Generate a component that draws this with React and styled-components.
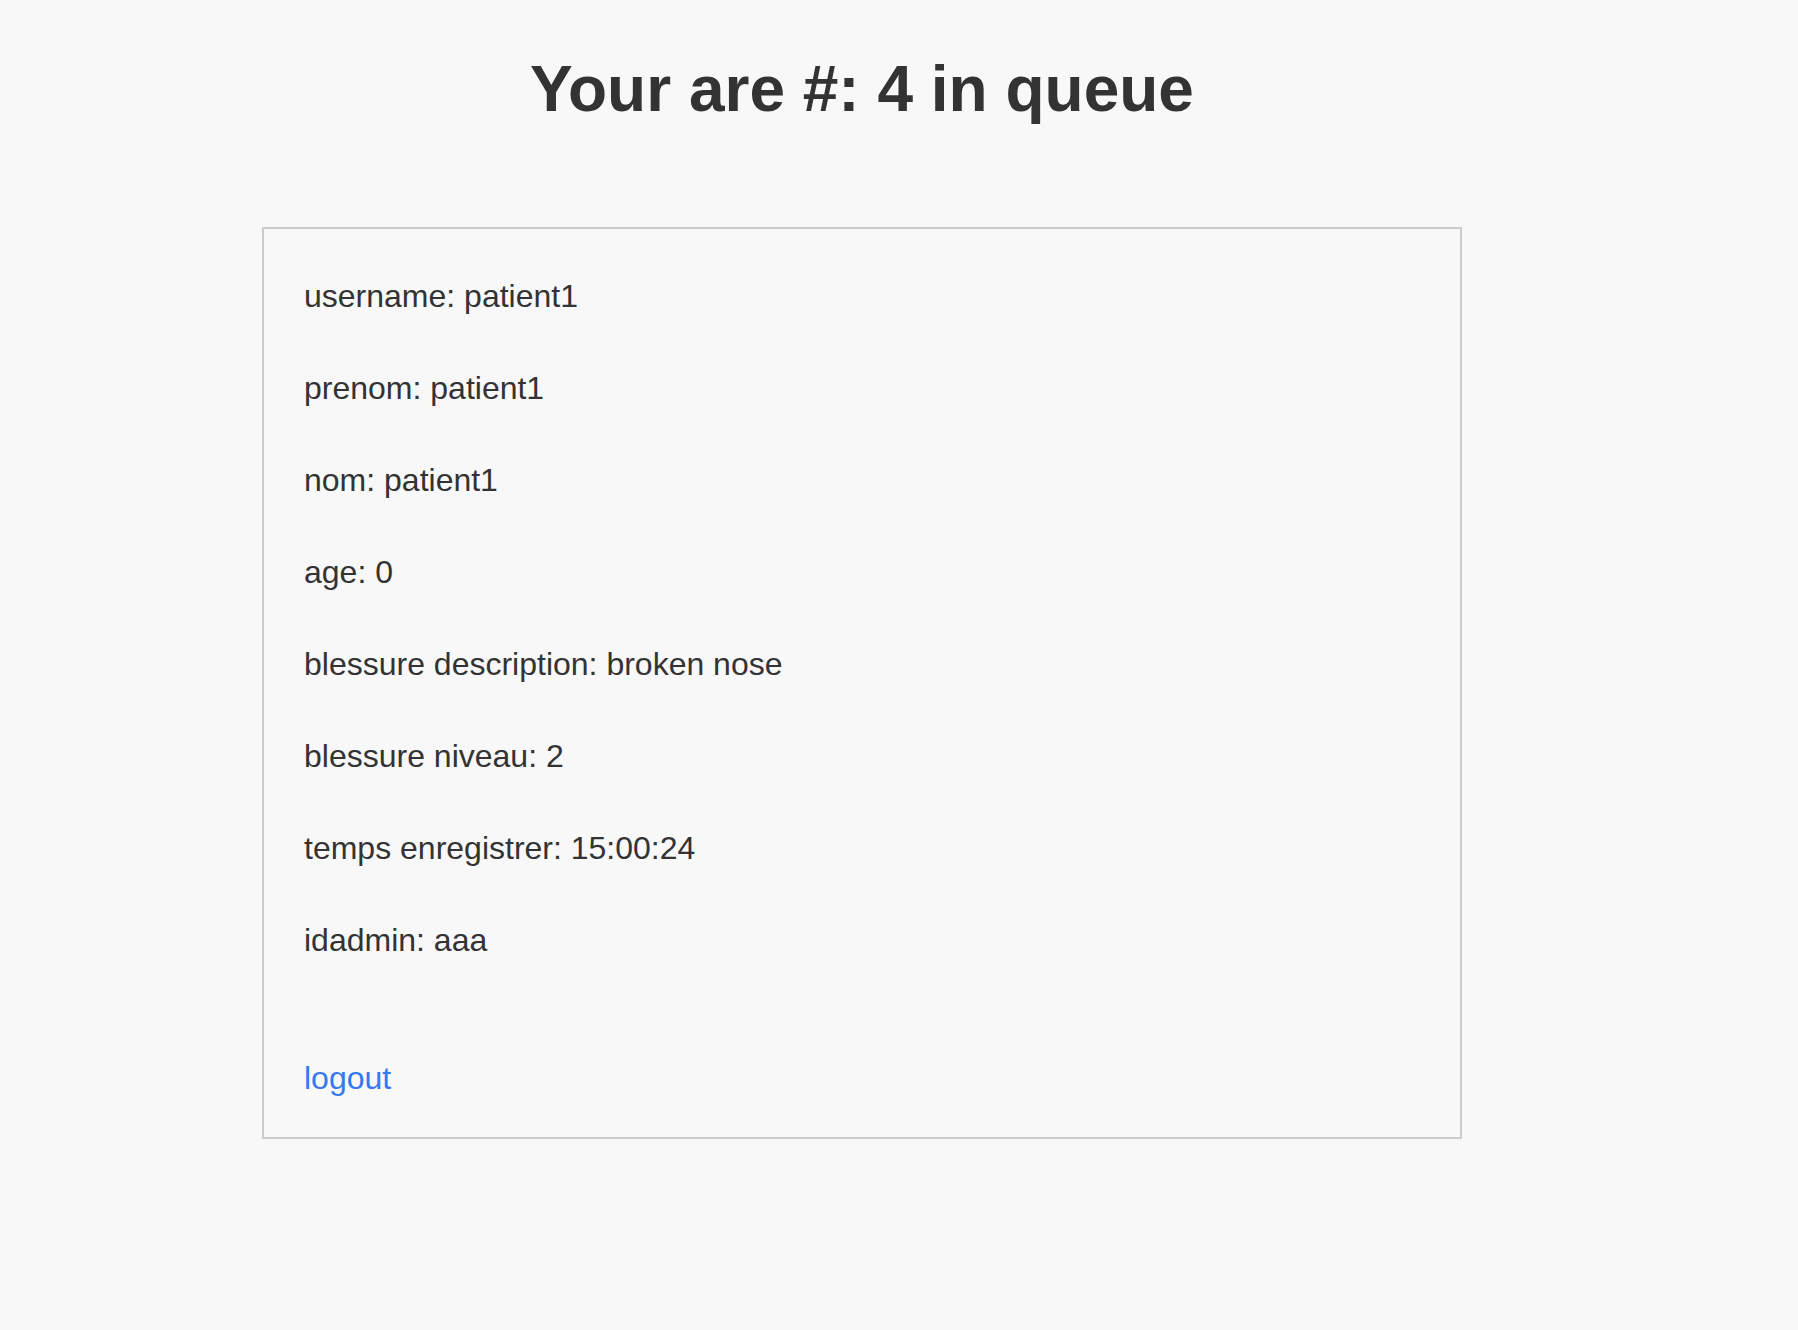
import React from 'react';
import styled, { createGlobalStyle } from 'styled-components';

const GlobalStyle = createGlobalStyle`
    html, body {
        margin: 0;
        padding: 0;
        background-color: #f8f8f8;
    }

    body {
        font-family: "Liberation Sans", Arial, sans-serif;
        color: #333333;
        min-height: 1330px;
    }
`;

const patient = [
    ['username', 'patient1'],
    ['prenom', 'patient1'],
    ['nom', 'patient1'],
    ['age', '0'],
    ['blessure description', 'broken nose'],
    ['blessure niveau', '2'],
    ['temps enregistrer', '15:00:24'],
    ['idadmin', 'aaa'],
];

const App = () => {
    return (
        <>
            <GlobalStyle />
            <Page>
                <Title>Your are #: 4 in queue</Title>
                <InfoCard>
                    {patient.map(([label, value]) => (
                        <InfoRow key={label}>
                            {label}: {value}
                        </InfoRow>
                    ))}
                    <LogoutLink href="#">logout</LogoutLink>
                </InfoCard>
            </Page>
        </>
    );
};

const Page = styled.div`
    width: 1200px;
    margin-left: 262px;
    padding-top: 52px;
`;

const Title = styled.h1`
    margin: 0 0 101px;
    font-size: 64px;
    font-weight: bold;
    line-height: 74px;
    text-align: center;
    color: #333333;
`;

const InfoCard = styled.div`
    display: flex;
    flex-direction: column;
    align-items: flex-start;
    border: 2px solid #cccccc;
    padding: 21px 40px 13px;
`;

const InfoRow = styled.div`
    font-size: 32px;
    line-height: 92px;
    height: 92px;
    color: #333333;
`;

const LogoutLink = styled.a`
    margin-top: 46px;
    font-size: 32px;
    line-height: 92px;
    color: #3479f0;
    text-decoration: none;
`;

export default App;
